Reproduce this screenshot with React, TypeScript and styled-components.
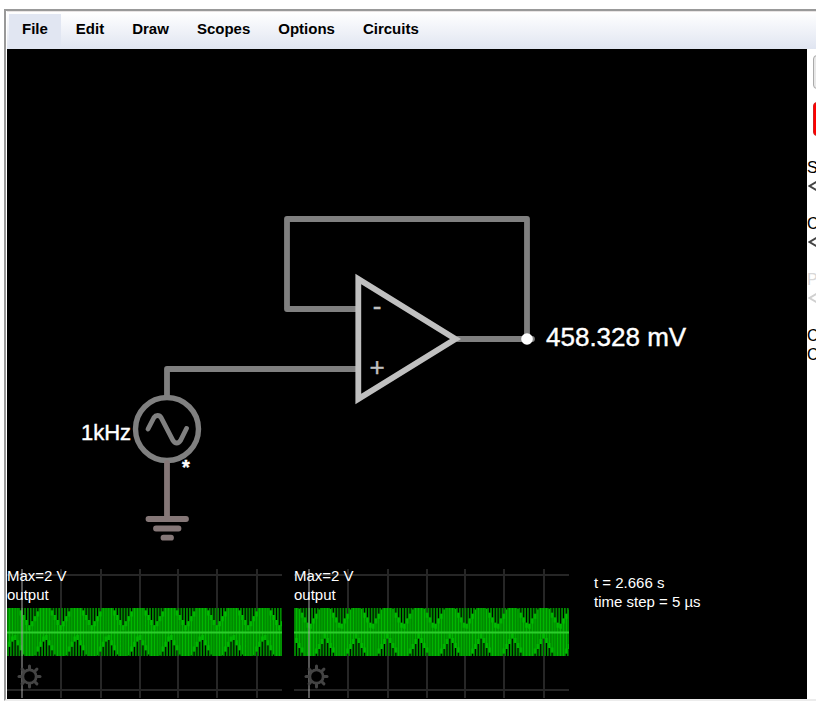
import React from "react";
import styled, { createGlobalStyle } from "styled-components";

const GlobalStyle = createGlobalStyle`
  * { box-sizing: border-box; }
  body {
    margin: 0;
    background: #fff;
    color: #000;
    font-family: "Liberation Sans", Arial, sans-serif;
    overflow: hidden;
  }
`;

const Page = styled.div`
  display: flex;
  min-height: 100vh;
  padding: 9px 0 6px 4px;
`;

const Frame = styled.div`
  flex: 1;
  min-width: 0;
  display: flex;
  flex-direction: column;
  border-top: 2px solid #999;
  border-left: 2px solid #999;
  border-bottom: 2px solid #ececec;
  padding-left: 1px;
  overflow: hidden;
`;

const MenuBar = styled.nav`
  display: flex;
  gap: 2px;
  height: 38px;
  padding: 2px 2px 0;
  border-top: 1px solid #e8e4e4;
  background: linear-gradient(#fff, #e0e5f1);
`;

const MenuButton = styled.button<{ $active?: boolean }>`
  border: 0;
  padding: 0 13px 6px;
  background: ${(p) => (p.$active ? "#e1e6f2" : "transparent")};
  color: #000;
  font: bold 15px "Liberation Sans", Arial, sans-serif;
`;

const Main = styled.main`
  flex: 1;
  display: flex;
`;

const Workspace = styled.section`
  flex: 0 0 calc(100% - 9px);
  display: flex;
  flex-direction: column;
  background: #000;
  color: #fff;
`;

const Schematic = styled.svg`
  display: block;
  width: 100%;
  flex: 1;
  font-family: "Liberation Sans", Arial, sans-serif;
`;

const ScopeRow = styled.div`
  display: flex;
  gap: 12px;
  height: 130px;
`;

const ScopePanel = styled.div`
  position: relative;
  flex: 0 0 275px;
`;

const Plot = styled.svg`
  display: block;
`;

const ScopeCaption = styled.div`
  position: absolute;
  top: -3px;
  left: 0;
  font-size: 15px;
  line-height: 19px;
  color: #fff;
`;

const SettingsButton = styled.button`
  position: absolute;
  left: 10px;
  bottom: 10px;
  width: 25px;
  height: 25px;
  padding: 0;
  border: 0;
  background: none;
`;

const SimInfo = styled.div`
  padding: 4px 0 0 13px;
  font-size: 15px;
  line-height: 19px;
  color: #fff;
`;

const Sidebar = styled.aside`
  flex: 0 0 160px;
  font-size: 16px;
  line-height: 19px;
`;

const SideButton = styled.button<{ $danger?: boolean }>`
  display: block;
  width: 148px;
  height: 34px;
  margin: 0 6px 13px;
  border: 1px solid ${(p) => (p.$danger ? "#c22" : "#aaa")};
  border-radius: 4px;
  background: ${(p) => (p.$danger ? "#f00" : "#e8e8e8")};
`;

const SideGroup = styled.div<{ $muted?: boolean }>`
  height: 56px;
  color: ${(p) => (p.$muted ? "#d8d8d8" : "#000")};
`;

const Controls = styled.div`
  height: 109px;
  padding-top: 6px;
`;

const StepButton = styled.button<{ $muted?: boolean }>`
  display: block;
  padding: 3px 1px;
  border: 0;
  background: none;
  color: ${(p) => (p.$muted ? "#d0d0d0" : "#444")};
`;

const menus = ["File", "Edit", "Draw", "Scopes", "Options", "Circuits"];

const BEAT = 31.25;
const PITCH = BEAT / 11;
const MID = 63;
const AMPLITUDE = 24;

function notchDepth(x: number, center: number) {
  const offset = (((x - center) % BEAT) + BEAT) % BEAT;
  const distance = Math.min(offset, BEAT - offset);
  return 18 * Math.pow(Math.max(0, 1 - distance / 11), 1.2);
}

function tracePaths(notch: number) {
  let peaks = "";
  let body = "";
  let glow = "";
  for (let x = 1; x < 274; x += PITCH) {
    peaks += `M${x.toFixed(2)} ${MID - AMPLITUDE}V${MID + AMPLITUDE}`;
    const bx = x + PITCH / 2;
    const upper = notchDepth(bx, notch);
    const lower = notchDepth(bx, notch + BEAT / 2);
    const top = MID - AMPLITUDE + upper;
    const bottom = MID + AMPLITUDE - lower;
    body += `M${bx.toFixed(2)} ${top.toFixed(1)}V${bottom.toFixed(1)}`;
    if (upper > 2) glow += `M${(bx - 1.4).toFixed(2)} ${top.toFixed(1)}v5h2.800v-5z`;
    if (lower > 2) glow += `M${(bx - 1.4).toFixed(2)} ${bottom.toFixed(1)}v-5h2.800v5z`;
  }
  return { peaks, body, glow };
}

function Scope({ notch }: { notch: number }) {
  const { peaks, body, glow } = tracePaths(notch);
  return (
    <ScopePanel>
      <Plot width="275" height="130" viewBox="0 0 275 130" aria-label="Scope trace">
        <path d="M54 0V129M94 0V129M133 0V129M171 0V129M210 0V129M250 0V129M0 6H275M0 121H275" stroke="#262626" strokeWidth="2" />
        <path d={peaks} stroke="#008a00" strokeWidth="1.8" />
        <path d={body} stroke="#00b800" strokeWidth="1.5" />
        <path d={glow} fill="#00c000" fillOpacity=".7" />
        <path d="M0 63.5H275" stroke="#2ccc2c" strokeWidth="2" />
        <path d="M15 0V129" stroke="#aaa" strokeOpacity=".5" strokeWidth="2" />
      </Plot>
      <ScopeCaption>
        <div>Max=2 V</div>
        <div>output</div>
      </ScopeCaption>
      <SettingsButton aria-label="Scope settings">
        <svg width="25" height="25" viewBox="-12.5 -12.5 25 25" fill="none" stroke="#444" strokeLinecap="round">
          <circle r="6.7" strokeWidth="2.8" />
          {[0, 45, 90, 135, 180, 225, 270, 315].map((a) => (
            <path key={a} d="M7.500 0H10.500" strokeWidth="3" transform={`rotate(${a})`} />
          ))}
        </svg>
      </SettingsButton>
    </ScopePanel>
  );
}

function Step({ muted }: { muted?: boolean }) {
  return (
    <StepButton $muted={muted} disabled={muted} aria-label="Decrease">
      <svg width="10" height="12" viewBox="0 0 10 12" fill="none" stroke="currentColor" strokeWidth="2" display="block">
        <path d="M10 1L1.5 6L10 11" />
      </svg>
    </StepButton>
  );
}

export default function App() {
  return (
    <Page>
      <GlobalStyle />
      <Frame>
        <MenuBar>
          {menus.map((m, i) => (
            <MenuButton key={m} $active={i === 0}>{m}</MenuButton>
          ))}
        </MenuBar>
        <Main>
          <Workspace>
            <Schematic viewBox="7 49 800 520" preserveAspectRatio="xMinYMin meet" fill="none" strokeWidth="5.8" strokeLinecap="round">
              <path d="M358 309H287V219H527V339M167 397V369H358M458 339H532" stroke="#808080" strokeLinejoin="round" />
              <path d="M358.3 279V399L455.5 339Z" stroke="#c0c0c0" strokeLinejoin="miter" />
              <circle cx="167" cy="429" r="31.5" stroke="#808080" strokeWidth="5.4" />
              <path d="M148 429L154 417.500Q155.500 415.500 157.500 415.500Q159.800 415.500 161 417.500L173 440.500Q174.500 443 176.700 443Q179 443 180.500 440.500L186.500 428.500" stroke="#808080" strokeWidth="4.8" />
              <path d="M167 463V519M148.500 519H186M156 528.500H178.500M163.500 537.700H171" stroke="#857777" />
              <circle cx="527" cy="339" r="5.8" fill="#fff" />
              <g fill="#fff" stroke="#fff" strokeWidth="0.4">
                <text x="546" y="346" fontSize="26">458.328 mV</text>
                <text x="81" y="440" fontSize="22">1kHz</text>
                <text x="182" y="474" fontSize="20" fontWeight="bold">*</text>
              </g>
              <g fill="#c0c0c0" stroke="#c0c0c0" strokeWidth="0.4" fontSize="26" textAnchor="middle">
                <text x="377" y="315">-</text>
                <text x="377" y="376">+</text>
              </g>
            </Schematic>
            <ScopeRow>
              <Scope notch={22.7} />
              <Scope notch={15.5} />
              <SimInfo>
                <div>t = 2.666 s</div>
                <div>time step = 5 µs</div>
              </SimInfo>
            </ScopeRow>
          </Workspace>
          <Sidebar>
            <Controls>
              <SideButton aria-label="Reset" />
              <SideButton $danger aria-label="Run or stop" />
            </Controls>
            <SideGroup>S<Step /></SideGroup>
            <SideGroup>C<Step /></SideGroup>
            <SideGroup $muted>P<Step muted /></SideGroup>
            <div>C</div>
            <div>C</div>
          </Sidebar>
        </Main>
      </Frame>
    </Page>
  );
}
